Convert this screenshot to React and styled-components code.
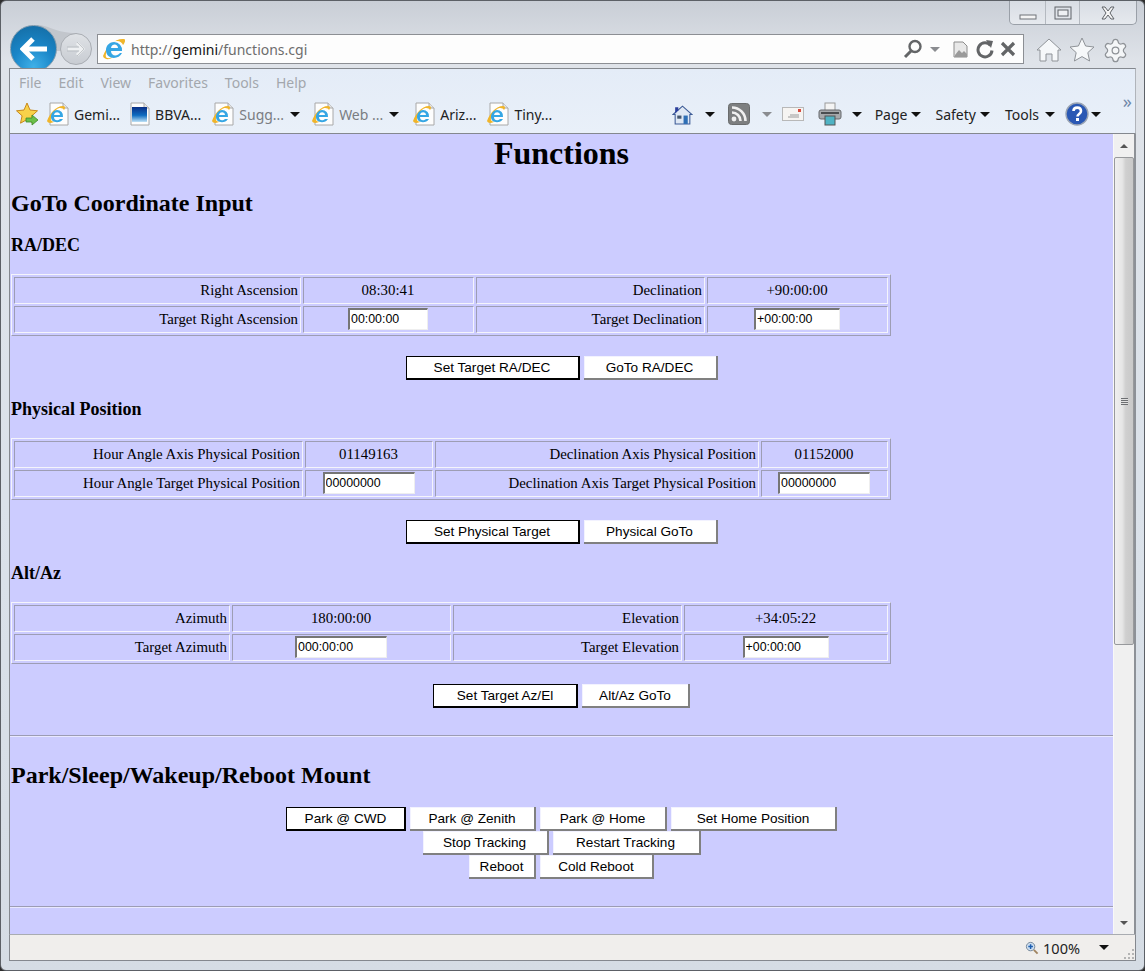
import React from 'react';
import styled, { createGlobalStyle } from 'styled-components';
import { Settings } from 'lucide-react';

const Global = createGlobalStyle`
  html, body {
    margin: 0;
    padding: 0;
    overflow: hidden;
    background: #2e2e2e;
  }
`;

const Frame = styled.div`
  width: 1145px;
  height: 971px;
  box-sizing: border-box;
  padding: 0 8px;
  background: linear-gradient(#c9ced6, #dfe3e9 60px, #dbe2ea 500px, #d5dce4);
  border: 1px solid #5c6066;
  border-radius: 6px;
  display: flex;
  flex-direction: column;
  overflow: hidden;
  font-family: 'Noto Sans', 'Liberation Sans', sans-serif;
`;

const TitleStrip = styled.div`
  height: 33px;
  flex: none;
  display: flex;
  justify-content: flex-end;
`;

const WindowControls = styled.div`
  width: 128px;
  height: 24px;
  margin-right: -1px;
  display: flex;
  box-sizing: border-box;
  border: 1px solid #9aa0a8;
  border-top: 0;
  border-radius: 0 0 5px 5px;
  background: linear-gradient(#d8dde4, #e6e9ee);
`;

const WinButton = styled.div`
  width: ${p => p.$w}px;
  display: flex;
  align-items: center;
  justify-content: center;
  border-left: ${p => (p.$first ? '0' : '1px solid #b4b9c0')};
`;

const NavRow = styled.div`
  height: 34px;
  flex: none;
  margin: 0 -8px;
  display: flex;
  position: relative;
`;

const Swoosh = styled.svg`
  position: absolute;
  left: 36px;
  top: -9px;
`;

const BackButton = styled.div`
  width: 47px;
  height: 47px;
  flex: none;
  margin: -9px 0 0 9px;
  border-radius: 50%;
  background: radial-gradient(circle at 50% 90%, #3fb0e8 0, #1a86c8 45%, #14699f 100%);
  border: 1px solid #7d99ad;
  box-sizing: border-box;
  display: flex;
  align-items: center;
  justify-content: center;
  position: relative;
`;

const ForwardButton = styled.div`
  width: 32px;
  height: 32px;
  flex: none;
  margin: -1px 0 0 3px;
  border-radius: 50%;
  background: linear-gradient(#dfe2e6, #c8ccd2);
  border: 1px solid #a9adb3;
  box-sizing: border-box;
  display: flex;
  align-items: center;
  justify-content: center;
  position: relative;
`;

const AddressBar = styled.div`
  width: 927px;
  height: 30px;
  flex: none;
  box-sizing: border-box;
  margin-left: 5px;
  background: #fdfdfd;
  border: 1px solid #8c8f94;
  display: flex;
  align-items: center;
  padding: 0 7px 0 4px;
`;

const Url = styled.div`
  flex: 1;
  margin-left: 5px;
  font-size: 14px;
  color: #6d6d6d;
  & b {
    font-weight: 400;
    color: #111;
  }
`;

const BarIcon = styled.span`
  display: flex;
  align-items: center;
  margin-left: ${p => p.$ml || 0}px;
`;

const ChromeIcons = styled.div`
  display: flex;
  align-items: center;
  margin: -2px 0 0 12px;
  gap: 7px;
`;

const ToolPanel = styled.div`
  height: 66px;
  flex: none;
  box-sizing: border-box;
  background: linear-gradient(#e4ecf7, #e9f0f9);
  border: 1px solid #84888e;
  border-right-color: #b0b4ba;
  display: flex;
  flex-direction: column;
  position: relative;
  z-index: 1;
`;

const MenuRow = styled.div`
  height: 27px;
  display: flex;
  align-items: center;
  padding-left: 9px;
  gap: 17px;
  font-size: 14px;
  color: #a3a7ad;
`;

const FavRow = styled.div`
  height: 36px;
  display: flex;
  align-items: center;
  padding-left: 6px;
  font-size: 14px;
  color: #222;
`;

const FavItem = styled.div`
  display: flex;
  align-items: center;
  gap: 5px;
  margin-left: ${p => p.$ml}px;
  color: ${p => (p.$dim ? '#7a7d82' : '#222')};
  white-space: nowrap;
`;

const Caret = styled.span`
  display: inline-block;
  width: 0;
  height: 0;
  margin-left: ${p => p.$ml || 0}px;
  border-left: 5px solid transparent;
  border-right: 5px solid transparent;
  border-top: 5px solid ${p => p.$c || '#111'};
  flex: none;
`;

const Spacer = styled.div`
  flex: 1;
`;

const EndGap = styled.div`
  flex: none;
  width: 34px;
`;

const Chevron = styled.span`
  position: absolute;
  right: 3px;
  top: 26px;
  font-size: 18px;
  line-height: 13px;
  color: #6f87a8;
`;

const MainRow = styled.div`
  height: 800px;
  flex: none;
  display: flex;
  border-left: 1px solid #84888e;
  border-right: 2px solid #8d9197;
`;

const Page = styled.div`
  flex: 1;
  min-width: 0;
  background: #ccccff;
  padding: 0 1px;
  overflow: hidden;
  font-family: 'Liberation Serif', serif;
  font-size: 14.85px;
  color: #000;
`;

const Title = styled.h1`
  font-size: 32px;
  line-height: 37px;
  text-align: center;
  margin: 1px 0 0;
`;

const SectionTitle = styled.h2`
  font-size: 24px;
  line-height: 28px;
  margin: ${p => p.$mt}px 0 0;
`;

const SubTitle = styled.h3`
  font-size: 18px;
  line-height: 21px;
  margin: ${p => p.$mt}px 0 0;
`;

const DataTable = styled.table`
  width: 880px;
  table-layout: fixed;
  box-sizing: border-box;
  border-collapse: separate;
  border-spacing: 2px;
  border-width: 1px;
  border-style: solid;
  border-color: #f4f4fb #9d9db4 #9d9db4 #f4f4fb;
  margin-top: 18px;
`;

const Cell = styled.td`
  height: 27px;
  padding: 0 2px 2px 1px;
  box-sizing: border-box;
  border-width: 1px;
  border-style: solid;
  border-color: #9d9db4 #f4f4fb #f4f4fb #9d9db4;
  text-align: ${p => (p.$label ? 'right' : 'center')};
  vertical-align: middle;
  line-height: 18px;
`;

const TextInput = styled.input`
  width: ${p => p.$w}px;
  height: 22px;
  box-sizing: border-box;
  padding: 0 1px;
  margin: 0;
  background: #fff;
  border-width: 2px 1px 1px 2px;
  border-style: solid;
  border-color: #767676 #eeeeee #eeeeee #767676;
  font-family: 'Liberation Sans', sans-serif;
  font-size: 12.4px;
  color: #000;
  vertical-align: middle;
`;

const ButtonRow = styled.div`
  display: flex;
  justify-content: center;
  gap: 4px;
  margin-top: ${p => p.$mt || 0}px;
`;

const PushButton = styled.button`
  width: ${p => p.$w}px;
  height: 24px;
  box-sizing: border-box;
  padding: 0;
  background: #fff;
  font-family: 'Liberation Sans', sans-serif;
  font-size: 13.6px;
  color: #000;
  border-style: solid;
  border-width: ${p => (p.$primary ? '1px 2px 2px 1px' : '0 2px 2px 0')};
  border-color: ${p => (p.$primary ? '#000' : '#808080')};
  box-shadow: ${p => (p.$primary ? 'none' : 'inset 1px 1px 0 #f2f2ff')};
`;

const Rule = styled.hr`
  margin: ${p => p.$mt}px -1px 0;
  height: 0;
  border: 0;
  border-top: 1px solid #9c9cb4;
  border-bottom: 1px solid #e8e8ff;
`;

const ScrollBar = styled.div`
  width: 21px;
  flex: none;
  display: flex;
  flex-direction: column;
  background: #f0f0f0;
  border-left: 1px solid #f8f8f8;
  box-sizing: border-box;
`;

const ScrollArrow = styled.div`
  height: 23px;
  flex: none;
  display: flex;
  align-items: center;
  justify-content: center;
`;

const ArrowGlyph = styled.span`
  width: 0;
  height: 0;
  border-left: 4px solid transparent;
  border-right: 4px solid transparent;
  ${p => (p.$up ? 'border-bottom: 4px solid #555;' : 'border-top: 4px solid #555;')}
`;

const ScrollThumb = styled.div`
  height: 488px;
  flex: none;
  box-sizing: border-box;
  border: 1px solid #97999c;
  border-radius: 2px;
  background: linear-gradient(90deg, #efefef, #e6e6e6 40%, #cfcfcf 60%, #c9c9c9);
  display: flex;
  align-items: center;
  justify-content: center;
`;

const Grip = styled.div`
  width: 7px;
  height: 7px;
  background: repeating-linear-gradient(#6d6f72 0, #6d6f72 1px, #e0e0e0 1px, #e0e0e0 2px);
`;

const ScrollTrack = styled.div`
  flex: 1;
`;

const StatusBar = styled.div`
  height: 27px;
  flex: none;
  box-sizing: border-box;
  background: #f0eeec;
  border: 1px solid #84888e;
  border-top-color: #a9acb1;
  display: flex;
  align-items: center;
  justify-content: flex-end;
  padding-right: 26px;
  font-size: 14.5px;
  color: #222;
  gap: 4px;
  position: relative;
`;

const ResizeGrip = styled.svg`
  position: absolute;
  right: 1px;
  bottom: 1px;
`;

const IeIcon = ({ size = 24 }) => (
  <svg width={size} height={size} viewBox="0 0 24 24">
    <path d="M1 19C5 8 14 1 22 2c2 .5 1 4-1 6-1-3-6-6-11-2C6 10 3 17 4 20c1 2 5 1 7 0-3 3-9 3-10-1z" fill="#f0b52a" />
    <path d="M12 5a8 8 0 0 1 8 9H9c0 5 6 6 9 2h2c-3 7-16 7-16-3 0-5 4-8 8-8zm-3 6h7c0-4-6-5-7 0z" fill="#35a6e4" />
  </svg>
);

const PageIcon = ({ children }) => (
  <svg width="22" height="24" viewBox="0 0 22 24">
    <path d="M3 1h13l5 5v17H3z" fill="#fdfdfd" stroke="#a8a8a8" />
    <path d="M16 1v5h5" fill="#e4e4e4" stroke="#a8a8a8" />
    {children}
  </svg>
);

const IePage = () => (
  <PageIcon>
    <path d="M0 19C3 11 9 4 16 4c3 0 2 3 1 4-1-2-5-3-8 0-3 2-6 8-5 10 1 2 3 2 5 1-3 2-8 3-9 0z" fill="#f0b52a" />
    <path d="M10 8a6 6 0 0 1 6 7H7c0 4 4 4 6 2h3c-3 5-12 4-12-2 0-4 3-7 6-7zm-3 5h6c0-3-5-4-6 0z" fill="#35a6e4" />
  </PageIcon>
);

const BbvaPage = () => (
  <PageIcon>
    <defs>
      <linearGradient id="bbva" x1="0" y1="0" x2="0" y2="1">
        <stop offset="0" stopColor="#0a2f86" />
        <stop offset="0.55" stopColor="#0f6cc0" />
        <stop offset="1" stopColor="#bfe2f6" />
      </linearGradient>
    </defs>
    <rect x="4" y="5" width="15" height="15" fill="url(#bbva)" />
  </PageIcon>
);

const favs = [
  { name: 'Gemi...', ml: 7, icon: <IePage /> },
  { name: 'BBVA...', ml: 8, icon: <BbvaPage /> },
  { name: 'Sugg...', ml: 11, icon: <IePage />, dim: true, caret: true },
  { name: 'Web ...', ml: 12, icon: <IePage />, dim: true, caret: true },
  { name: 'Ariz...', ml: 14, icon: <IePage /> },
  { name: 'Tiny...', ml: 11, icon: <IePage /> },
];

const ra = {
  cols: [287, 171, 229, 181],
  rows: [
    ['Right Ascension', '08:30:41', 'Declination', '+90:00:00'],
    ['Target Right Ascension', '00:00:00', 'Target Declination', '+00:00:00'],
  ],
  inputs: [80, 86],
};

const phys = {
  cols: [289, 128, 324, 127],
  rows: [
    ['Hour Angle Axis Physical Position', '01149163', 'Declination Axis Physical Position', '01152000'],
    ['Hour Angle Target Physical Position', '00000000', 'Declination Axis Target Physical Position', '00000000'],
  ],
  inputs: [92, 92],
};

const altaz = {
  cols: [216, 219, 229, 204],
  rows: [
    ['Azimuth', '180:00:00', 'Elevation', '+34:05:22'],
    ['Target Azimuth', '000:00:00', 'Target Elevation', '+00:00:00'],
  ],
  inputs: [92, 86],
};

const CoordTable = ({ data }) => (
  <DataTable>
    <colgroup>
      {data.cols.map((w, i) => (
        <col key={i} style={{ width: w }} />
      ))}
    </colgroup>
    <tbody>
      <tr>
        {data.rows[0].map((t, i) => (
          <Cell key={i} $label={i % 2 === 0}>
            {t}
          </Cell>
        ))}
      </tr>
      <tr>
        <Cell $label>{data.rows[1][0]}</Cell>
        <Cell>
          <TextInput $w={data.inputs[0]} defaultValue={data.rows[1][1]} />
        </Cell>
        <Cell $label>{data.rows[1][2]}</Cell>
        <Cell>
          <TextInput $w={data.inputs[1]} defaultValue={data.rows[1][3]} />
        </Cell>
      </tr>
    </tbody>
  </DataTable>
);

export default function App() {
  return (
    <Frame>
      <Global />
      <TitleStrip>
        <WindowControls>
          <WinButton $w={36} $first>
            <svg width="18" height="14" viewBox="0 0 18 14">
              <rect x="1" y="9" width="16" height="4" fill="#f4f4f4" stroke="#6f7378" />
            </svg>
          </WinButton>
          <WinButton $w={33}>
            <svg width="18" height="14" viewBox="0 0 18 14">
              <rect x="1" y="1" width="16" height="12" fill="none" stroke="#5f6368" />
              <rect x="4" y="4" width="10" height="6" fill="#eef0f3" stroke="#5f6368" />
            </svg>
          </WinButton>
          <WinButton $w={57}>
            <svg width="16" height="14" viewBox="0 0 16 14">
              <path d="M2 1h3l3 4 3-4h3l-4 6 4 6h-3L8 9l-3 4H2l4-6z" fill="#f5f5f5" stroke="#5f6368" />
            </svg>
          </WinButton>
        </WindowControls>
      </TitleStrip>

      <NavRow>
        <Swoosh width="46" height="26" viewBox="0 0 46 26">
          <path d="M0 0c12 0 18 8 40 8v18H0z" fill="#c2c6cc" />
        </Swoosh>
        <BackButton>
          <svg width="28" height="24" viewBox="0 0 28 24">
            <path d="M13 2L3 12l10 10M4 12h23" fill="none" stroke="#fff" strokeWidth="5" />
          </svg>
        </BackButton>
        <ForwardButton>
          <svg width="20" height="16" viewBox="0 0 20 16">
            <path d="M11 2l6 6-6 6M2 8h14" fill="none" stroke="#eef0f2" strokeWidth="3" />
            <path d="M11 1l7 7-7 7M1 6h12M1 10h12" fill="none" stroke="#b0b4b9" strokeWidth="0.7" />
          </svg>
        </ForwardButton>
        <AddressBar>
          <IeIcon size={24} />
          <Url>
            http://<b>gemini</b>/functions.cgi
          </Url>
          <BarIcon>
            <svg width="20" height="20" viewBox="0 0 20 20">
              <circle cx="12" cy="7.5" r="5.5" fill="none" stroke="#636567" strokeWidth="2.4" />
              <path d="M8 12l-6 6" stroke="#636567" strokeWidth="3" />
            </svg>
          </BarIcon>
          <Caret $ml={7} $c="#8a8c90" />
          <BarIcon $ml={13}>
            <svg width="15" height="17" viewBox="0 0 15 17">
              <path d="M1 1h9l4 4v11H1z" fill="#e8e8e8" stroke="#8c8c8c" />
              <path d="M2 14l4-5 3 3 2-2 3 3v3H2z" fill="#9a9a9a" />
            </svg>
          </BarIcon>
          <BarIcon $ml={7}>
            <svg width="20" height="20" viewBox="0 0 20 20">
              <path d="M15.5 6.5a7 7 0 1 0 1.5 5" fill="none" stroke="#636567" strokeWidth="3" />
              <path d="M11 1l7 1-2 7z" fill="#636567" />
            </svg>
          </BarIcon>
          <BarIcon $ml={5}>
            <svg width="16" height="16" viewBox="0 0 16 16">
              <path d="M2 2l12 12M14 2L2 14" stroke="#636567" strokeWidth="3.2" />
            </svg>
          </BarIcon>
        </AddressBar>
        <ChromeIcons>
          <svg width="26" height="26" viewBox="0 0 26 26">
            <path d="M1 13L13 2l12 11h-3v11h-6v-7h-6v7H4V13z" fill="#f6f8fa" stroke="#8f9398" />
          </svg>
          <svg width="26" height="26" viewBox="0 0 26 26">
            <path d="M13 1l3.6 8 8.4 1-6.2 5.6 1.8 8.4-7.6-4.4-7.6 4.4 1.8-8.4L1 10l8.4-1z" fill="#f6f8fa" stroke="#8f9398" />
          </svg>
          <Settings size={27} color="#8f9398" fill="#f4f6f8" strokeWidth={1.1} />
        </ChromeIcons>
      </NavRow>

      <ToolPanel>
        <MenuRow>
          <span>File</span>
          <span>Edit</span>
          <span>View</span>
          <span>Favorites</span>
          <span>Tools</span>
          <span>Help</span>
        </MenuRow>
        <FavRow>
          <svg width="24" height="24" viewBox="0 0 24 24">
            <path d="M11 1l3 7 7.5.8-5.6 5 1.6 7.4L11 17.5l-6.5 3.7 1.6-7.4-5.6-5L8 8z" fill="#f8d24a" stroke="#c8891c" />
            <path d="M10 16h6v-3l6 5-6 5v-3h-6z" fill="#6cc04a" stroke="#3f8a2a" strokeWidth="0.8" />
          </svg>
          {favs.map(f => (
            <FavItem key={f.name} $ml={f.ml} $dim={f.dim}>
              {f.icon}
              <span>{f.name}</span>
              {f.caret && <Caret $ml={1} />}
            </FavItem>
          ))}
          <Spacer />
          <svg width="21" height="21" viewBox="0 0 20 20">
            <path d="M1 10L10 2l9 8h-2v9H3v-9z" fill="#dfe8f4" stroke="#3c5a96" />
            <path d="M3 3h3v3l-3 3z" fill="#2c3f9c" />
            <rect x="11" y="11" width="4" height="8" fill="#2f6fb5" />
            <rect x="5" y="11" width="4" height="3" fill="#44566e" />
          </svg>
          <Caret $ml={12} />
          <BarIcon $ml={13}>
            <svg width="22" height="22" viewBox="0 0 22 22">
              <rect x="0.5" y="0.5" width="21" height="21" rx="3" fill="#7d7f80" stroke="#6a6c6d" />
              <circle cx="6" cy="16" r="2.4" fill="#f0f0f0" />
              <path d="M4 9.5a8.5 8.5 0 0 1 8.5 8.5M4 4.5A13.5 13.5 0 0 1 17.5 18" fill="none" stroke="#f0f0f0" strokeWidth="2.6" />
            </svg>
          </BarIcon>
          <Caret $ml={12} $c="#8a8c90" />
          <BarIcon $ml={10}>
            <svg width="22" height="16" viewBox="0 0 22 16">
              <rect x="0.5" y="1.5" width="21" height="13" fill="#f6f4f2" stroke="#b8b8b8" />
              <rect x="16" y="3" width="3" height="3" fill="#d84a3c" />
              <path d="M8 9h9M6 11h11" stroke="#9a9a9a" />
            </svg>
          </BarIcon>
          <BarIcon $ml={14}>
            <svg width="24" height="24" viewBox="0 0 24 24">
              <rect x="7" y="1" width="10" height="8" fill="#f4f4f4" stroke="#9a9a9a" />
              <rect x="1" y="8" width="22" height="9" rx="2" fill="#a6a9ac" stroke="#66696c" />
              <rect x="7" y="14" width="10" height="9" fill="#4fb3c4" stroke="#555" />
              <rect x="3" y="10" width="18" height="2" fill="#4a4d50" />
            </svg>
          </BarIcon>
          <Caret $ml={10} />
          <FavItem $ml={13}>Page</FavItem>
          <Caret $ml={4} />
          <FavItem $ml={14}>Safety</FavItem>
          <Caret $ml={4} />
          <FavItem $ml={15}>Tools</FavItem>
          <Caret $ml={6} />
          <BarIcon $ml={10}>
            <svg width="24" height="24" viewBox="0 0 24 24">
              <circle cx="12" cy="12" r="11" fill="#2a58b4" stroke="#9aa4b4" strokeWidth="1.4" />
              <path d="M8.5 9c0-4.5 7.5-4.5 7.5 0 0 3-3.5 3-3.5 5.5" fill="none" stroke="#fff" strokeWidth="2.6" />
              <rect x="11" y="16" width="3" height="3" fill="#fff" />
            </svg>
          </BarIcon>
          <Caret $ml={2} />
          <EndGap />
        </FavRow>
        <Chevron>»</Chevron>
      </ToolPanel>

      <MainRow>
        <Page>
          <Title>Functions</Title>
          <SectionTitle $mt={17}>GoTo Coordinate Input</SectionTitle>
          <SubTitle $mt={18}>RA/DEC</SubTitle>
          <CoordTable data={ra} />
          <ButtonRow $mt={20}>
            <PushButton $primary $w={174}>Set Target RA/DEC</PushButton>
            <PushButton $w={134}>GoTo RA/DEC</PushButton>
          </ButtonRow>
          <SubTitle $mt={19}>Physical Position</SubTitle>
          <CoordTable data={phys} />
          <ButtonRow $mt={20}>
            <PushButton $primary $w={174}>Set Physical Target</PushButton>
            <PushButton $w={134}>Physical GoTo</PushButton>
          </ButtonRow>
          <SubTitle $mt={19}>Alt/Az</SubTitle>
          <CoordTable data={altaz} />
          <ButtonRow $mt={20}>
            <PushButton $primary $w={145}>Set Target Az/El</PushButton>
            <PushButton $w={108}>Alt/Az GoTo</PushButton>
          </ButtonRow>
          <Rule $mt={27} />
          <SectionTitle $mt={24}>Park/Sleep/Wakeup/Reboot Mount</SectionTitle>
          <ButtonRow $mt={18}>
            <PushButton $primary $w={120}>Park @ CWD</PushButton>
            <PushButton $w={126}>Park @ Zenith</PushButton>
            <PushButton $w={127}>Park @ Home</PushButton>
            <PushButton $w={166}>Set Home Position</PushButton>
          </ButtonRow>
          <ButtonRow>
            <PushButton $w={126}>Stop Tracking</PushButton>
            <PushButton $w={148}>Restart Tracking</PushButton>
          </ButtonRow>
          <ButtonRow>
            <PushButton $w={67}>Reboot</PushButton>
            <PushButton $w={114}>Cold Reboot</PushButton>
          </ButtonRow>
          <Rule $mt={27} />
        </Page>
        <ScrollBar>
          <ScrollArrow>
            <ArrowGlyph $up />
          </ScrollArrow>
          <ScrollThumb>
            <Grip />
          </ScrollThumb>
          <ScrollTrack />
          <ScrollArrow>
            <ArrowGlyph />
          </ScrollArrow>
        </ScrollBar>
      </MainRow>

      <StatusBar>
        <svg width="14" height="14" viewBox="0 0 15 15">
          <circle cx="6" cy="6" r="4.5" fill="#cfe0f2" stroke="#6f8296" />
          <path d="M6 3.5v5M3.5 6h5" stroke="#1f5fb0" strokeWidth="1.6" />
          <path d="M9.5 9.5l4 4" stroke="#a08460" strokeWidth="2" />
        </svg>
        <span>100%</span>
        <Caret $ml={15} />
        <ResizeGrip width="11" height="11" viewBox="0 0 11 11">
          <path d="M9 1h2v2H9zM5 5h2v2H5zM9 5h2v2H9zM1 9h2v2H1zM5 9h2v2H5zM9 9h2v2H9z" fill="#b4b4b4" />
        </ResizeGrip>
      </StatusBar>
    </Frame>
  );
}
